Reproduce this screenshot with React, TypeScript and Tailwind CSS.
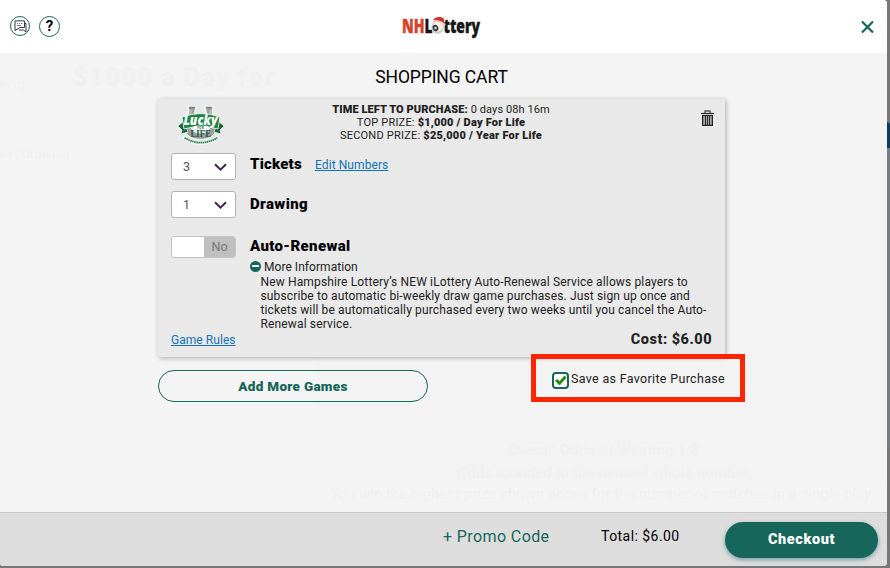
import React from "react";

function Chevron() {
  return (
    <svg className="h-[8px] w-[13px]" viewBox="0 0 13 8" fill="none" stroke="#43264f" strokeWidth="2">
      <path d="M1 1.2 6.5 6.6 12 1.2" />
    </svg>
  );
}

function SelectBox({ value }: { value: string }) {
  return (
    <div className="flex h-[27px] w-[65px] items-center justify-between rounded-[3px] border border-[#b4b4b4] bg-white pr-2 pl-[11px] text-[12.5px] text-[#555]">
      <span className="mt-px">{value}</span>
      <Chevron />
    </div>
  );
}

function NHLogo() {
  return (
    <svg className="h-[36px] w-[82px] overflow-visible" viewBox="0 0 82 36">
      <g fontFamily="'Open Sans', sans-serif" fontWeight="800" fontSize="19">
        <text x="1" y="23.500" fill="#d5442d" stroke="#d5442d" strokeWidth=".4" textLength="22.500" lengthAdjust="spacingAndGlyphs">NH</text>
        <text x="23.500" y="23.500" fill="#151515" stroke="#151515" strokeWidth=".4" textLength="8" lengthAdjust="spacingAndGlyphs">L</text>
        <text x="42.500" y="23.500" fill="#151515" stroke="#151515" strokeWidth=".4" textLength="36.500" lengthAdjust="spacingAndGlyphs">ttery</text>
      </g>
      <circle cx="36.500" cy="18.500" r="6.300" fill="#cfcac7" />
      <circle cx="37" cy="17.500" r="5" fill="#f3efed" />
      <ellipse cx="34.500" cy="19" rx="2.700" ry="3.200" fill="#333" transform="rotate(-25 34.500 19)" />
      <circle cx="34.500" cy="19" r="1.200" fill="#eee" />
      <path d="M32 11.500C33 8 40 6.500 43 10l.5 4.500c-3.500-3-8-4-11.500-3Z" fill="#c73627" />
      <path d="M31.500 13c4-1.500 8-1 11.500 2" stroke="#e8c5bb" strokeWidth="1.200" fill="none" />
      <circle cx="43.300" cy="15.500" r="1.200" fill="#ddd" />
    </svg>
  );
}

function LuckyLogo() {
  return (
    <svg className="h-[40px] w-[48px]" viewBox="0 0 48 40">
      <path d="M11 1.500h8l-1 4c0 6-4 9-4 15 0 5 4 7.500 9.500 7.500s9.500-2.500 9.500-7.500c0-6-4-9-4-15l-1-4h8l-1 4c0 5 5 9 5 15 0 9-7 14-16.500 14S7 29.500 7 20.500c0-6 5-10 5-15Z" fill="#9a9fa2" stroke="#fff" strokeWidth="1" />
      <path d="M12 2.500h6M29 2.500h6" stroke="#787e82" strokeWidth="1.500" />
      <path d="M14 5c0 5-4 9-4.500 14M33 5c0 5 4 9 4.500 14" fill="none" stroke="#bfc3c5" strokeWidth="1.500" />
      <path d="M.8 21 7 16l4 11-7 2 1-4ZM47.200 21 41 16l-4 11 7 2-1-4Z" fill="#17663a" stroke="#fff" strokeWidth=".7" />
      <path d="M5 12q19-7 38 0l-2 12q-17-5-34 0Z" fill="#218344" stroke="#fff" strokeWidth=".8" />
      <text x="6.500" y="19.500" fontFamily="'Open Sans', sans-serif" fontStyle="italic" fontWeight="800" fontSize="13.500" fill="#fff" textLength="34" lengthAdjust="spacingAndGlyphs">Lucky</text>
      <path d="M18 22.500h12" stroke="#fff" strokeWidth="3.400" strokeLinecap="round" />
      <text x="20.300" y="23.700" fontFamily="'Open Sans', sans-serif" fontWeight="700" fontSize="3.300" fill="#31764c">FOR</text>
      <text x="13.500" y="32" fontFamily="'Liberation Serif', serif" fontWeight="700" fontSize="9.500" fill="#24583a" textLength="20.500" lengthAdjust="spacingAndGlyphs">LIFE</text>
      <path d="M7 31q17 12 34 0l1 2.500q-18 12-36 0Z" fill="#fff" />
      <path d="M7.500 32.700q16.500 10 33 0" fill="none" stroke="#218344" strokeWidth="1.800" strokeDasharray="1.600 .5" />
    </svg>
  );
}

function ChatIcon() {
  return (
    <svg className="size-[13px]" viewBox="0 0 13 13" fill="none" stroke="#222" strokeWidth=".9">
      <path d="M1 .9h9.500v6.600H6L1 10.600Z" />
      <path d="M10.700 3.500h1.300v8.500L9.500 10H5" />
      <path d="M3 3.500h1.200M5 3.500h1.200M7 3.500h1.500M3 5.500h4" strokeWidth=".6" />
    </svg>
  );
}

function TrashIcon() {
  return (
    <svg className="h-[16px] w-[13px]" viewBox="0 0 13 16" fill="none">
      <path d="M4 3V1h5v2" stroke="#555" strokeWidth="1.300" />
      <path d="M0 3.500h13" stroke="#222" strokeWidth="1.200" />
      <path d="M1.600 5.500h9.800v9.900H1.600Z" fill="#a5a5a5" stroke="#222" strokeWidth="1.200" />
      <path d="M4.500 6v9M6.500 6v9M8.500 6v9" stroke="#222" strokeWidth=".9" />
    </svg>
  );
}

function Backdrop() {
  return (
    <div className="absolute inset-0 overflow-hidden whitespace-nowrap text-[#f0f0f0]">
      <div className="absolute top-[67px] right-0 h-[361px] w-[570px] bg-[#f3f3f3]" />
      <p className="absolute top-[6px] left-[73px] text-[26px] leading-9 font-extrabold tracking-[1.1px]">$1000 a Day for</p>
      <p className="absolute top-[22px] left-0 text-[13px]">in up</p>
      <p className="absolute top-[91px] left-0 text-[13px] tracking-[0.2px]">ext Drawing</p>
      <p className="absolute top-[386px] left-[508px] text-[15px] font-medium tracking-[0.2px]">Overall Odds of Winning 1:8</p>
      <p className="absolute top-[409px] left-[457px] text-[15px] tracking-[0.1px]">Odds rounded to the nearest whole number.</p>
      <p className="absolute top-[430px] left-[330px] text-[15px]">You win the highest prize shown above for the number of matches in a single play.</p>
    </div>
  );
}

export default function App() {
  return (
    <div className="relative h-[568px] w-[890px] overflow-hidden bg-[#777] font-[Roboto,sans-serif] text-[#222]">
      <div className="absolute top-[122px] right-0 h-[26px] w-[10px] rounded-tr bg-[#0b3b63]" />
      <div className="absolute top-[148px] right-0 h-[300px] w-[10px] bg-[#747d84]" />
      <div className="relative flex h-[566px] w-[887px] flex-col overflow-hidden rounded-r-[4px] rounded-bl-[3px] bg-[#f4f4f4]">
        <header className="flex h-[53px] shrink-0 items-center justify-between bg-white pr-[13px] pl-[10px]">
          <div className="flex w-[66px] gap-[9px]">
            <div className="flex size-5 items-center justify-center rounded-full border border-[#1a665c]"><ChatIcon /></div>
            <div className="flex size-[21px] items-center justify-center rounded-full border border-[#1a665c] text-[15px] font-bold text-black">?</div>
          </div>
          <NHLogo />
          <div className="flex w-[66px] justify-end">
            <svg className="size-[13px]" viewBox="0 0 13 13" stroke="#17675b" strokeWidth="2.200"><path d="m1 1.500 11 11M12 1.500 1 12.500" /></svg>
          </div>
        </header>

        <main className="relative h-[459px] shrink-0">
          <Backdrop />
          <div className="relative ml-[158px] w-[567px] pt-[12px]">
            <h1 className="h-[34px] text-center text-[17.5px] leading-6 tracking-[-0.1px] text-black">SHOPPING CART</h1>
            <section className="flex h-[258px] rounded-[2px] bg-[#e9e9e9] pl-[13px] shadow-[1px_1px_5px_rgba(0,0,0,0.3)]">
              <div className="flex w-[79px] flex-col items-start">
                <div className="mt-[6px] ml-[6px] h-[48px]"><LuckyLogo /></div>
                <SelectBox value="3" />
                <div className="h-[11px]" />
                <SelectBox value="1" />
                <div className="mt-[18px] flex h-[22px] w-[65px] overflow-hidden rounded-[3px] border border-[#c4c4c4] bg-white">
                  <div className="ml-8 flex grow items-center justify-center bg-[#bfbfbf] text-[12.5px] text-[#777]">No</div>
                </div>
                <a className="mt-[74px] text-[12px] leading-4 tracking-[0.05px] whitespace-nowrap text-[#1274b8] underline">Game Rules</a>
              </div>
              <div className="flex w-[462px] flex-col">
                <div className="flex h-[54px] pt-[4px]">
                  <div className="w-[384px] text-center text-[11px] leading-[13px]">
                    <p className="tracking-[0.09px]"><b className="font-black">TIME LEFT TO PURCHASE:</b> 0 days 08h 16m</p>
                    <p className="tracking-[0.2px]">TOP PRIZE: <b className="font-black">$1,000 / Day For Life</b></p>
                    <p className="tracking-[0.22px]">SECOND PRIZE: <b className="font-black">$25,000 / Year For Life</b></p>
                  </div>
                  <div className="mt-[7px] ml-[67px] w-[13px] shrink-0 pl-[2px]"><TrashIcon /></div>
                </div>
                <div className="flex h-[40px] items-start text-black">
                  <h2 className="w-[65px] text-[15px] leading-[23px] font-black tracking-[0.2px]">Tickets</h2>
                  <a className="text-[12px] leading-6 tracking-[0.08px] text-[#1274b8] underline">Edit Numbers</a>
                </div>
                <h2 className="h-[42px] text-[15px] leading-[23px] font-black tracking-[0.4px] text-black">Drawing</h2>
                <h2 className="h-[24px] text-[15px] leading-[23px] font-black tracking-[0.35px] text-black">Auto-Renewal</h2>
                <div className="flex h-[16px] items-center gap-[3px] text-[12px]">
                  <span className="-mt-[2px] flex size-[11px] items-center justify-center rounded-full bg-[#17665b]"><span className="h-[2px] w-[7px] bg-white" /></span>
                  <span className="tracking-[0.05px]">More Information</span>
                </div>
                <div className="pl-[10.5px] text-[12px] leading-[14px] tracking-[0.14px] whitespace-nowrap">
                  <p>New Hampshire Lottery’s NEW iLottery Auto-Renewal Service allows players to</p>
                  <p>subscribe to automatic bi-weekly draw game purchases. Just sign up once and</p>
                  <p>tickets will be automatically purchased every two weeks until you cancel the Auto-</p>
                  <p>Renewal service.</p>
                </div>
                <p className="text-right text-[14.5px] leading-[18px] font-extrabold tracking-[0.5px]">Cost: $6.00</p>
              </div>
            </section>
            <div className="mt-[-3px] flex justify-between">
              <button className="mt-[16px] h-[32px] w-[270px] rounded-full border border-[#17665b] text-[13.5px] font-black tracking-[0.3px] text-[#17665b]">Add More Games</button>
              <label className="mr-[-20px] flex h-[48px] w-[214px] items-center border-[5px] border-[#fd2600] pl-[16px] text-[12.5px]">
                <span className="mt-[4px] flex size-[17px] shrink-0 items-center justify-center rounded-[4px] border-2 border-[#17665b] bg-white">
                  <svg className="size-[13px]" viewBox="0 0 13 13"><path d="M1.500 6.700 3.500 5.500l2 2.500L10.500 2l1.500 1.500-6.500 7.500Z" fill="#168900" stroke="#168900" strokeWidth=".8" /></svg>
                </span>
                <span className="mt-[3px] ml-[2px] tracking-[0.32px] whitespace-nowrap">Save as Favorite Purchase</span>
              </label>
            </div>
          </div>
        </main>

        <footer className="flex h-[54px] shrink-0 items-start border-t border-[#c8c8c8] bg-[#ddd] pl-[443px] text-black">
          <a className="w-[158px] pt-[12px] text-[16px] leading-6 tracking-[0.4px] text-[#17665b]">+ Promo Code</a>
          <span className="w-[124px] pt-[11px] text-[14px] leading-6 tracking-[0.45px]">Total: $6.00</span>
          <button className="mt-[9px] h-[36px] w-[153px] rounded-full bg-[#17665b] text-[14.5px] font-black tracking-[0.6px] text-white shadow-[0_2px_4px_rgba(23,102,120,0.5)]">Checkout</button>
        </footer>
      </div>
    </div>
  );
}
